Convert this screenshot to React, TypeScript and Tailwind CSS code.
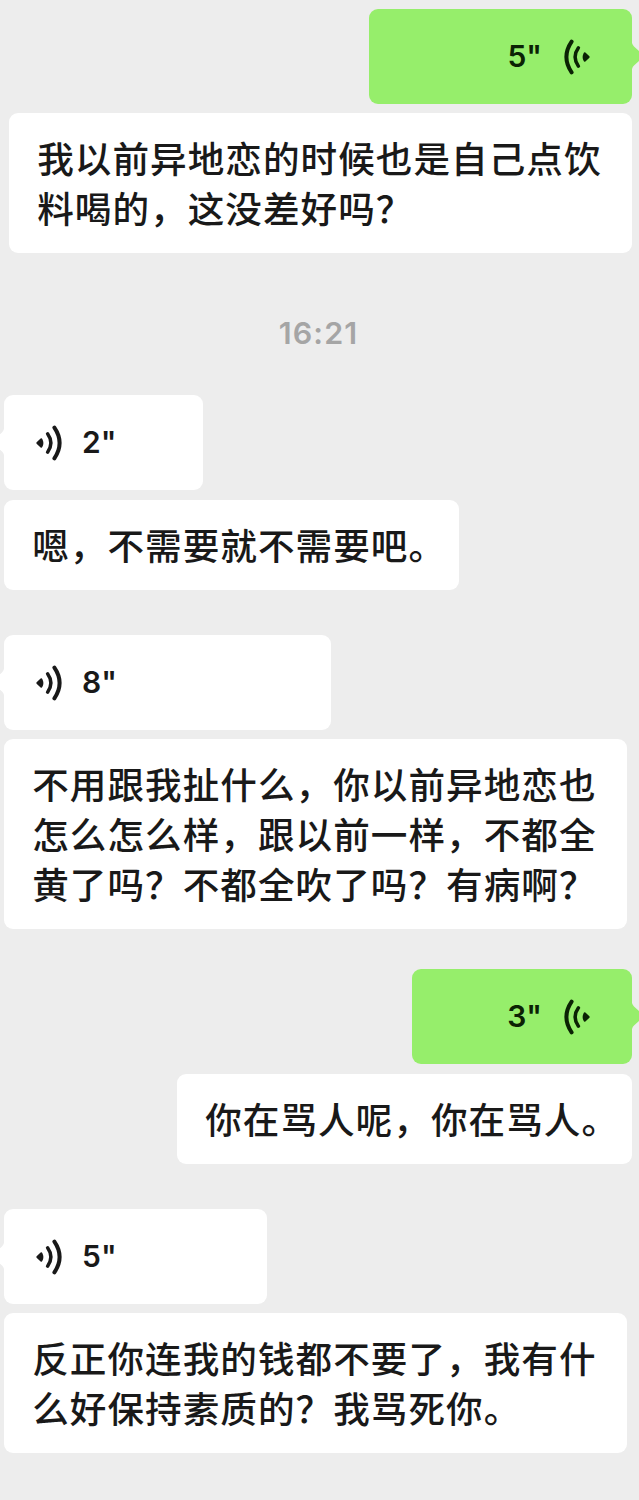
import { clsx } from "clsx";

type Side = "left" | "right";

function SoundIcon({ side }: { side: Side }) {
  return (
    <svg
      viewBox="0 0 26 36"
      className={clsx("h-9 w-[26px] shrink-0", side === "right" && "-scale-x-100")}
      fill="none"
      stroke="currentColor"
      strokeLinecap="round"
    >
      <path
        d="M0.6 17.2 L4.6 13.6 Q5.8 12.9 6.4 14.2 Q8.4 18 6.4 21.8 Q5.8 23.1 4.6 22.4 L0.6 18.8 Q0 18 0.6 17.2 Z"
        fill="currentColor"
        stroke="none"
      />
      <path d="M11.6 8.8 Q18.2 18 11.6 27.2" strokeWidth="3.5" />
      <path d="M18.4 2.7 Q28.8 18 18.4 33.3" strokeWidth="4" />
    </svg>
  );
}

function Voice({ side, seconds, className }: { side: Side; seconds: number; className: string }) {
  const right = side === "right";
  return (
    <div
      className={clsx(
        "relative flex h-[95px] items-center rounded-[9px]",
        right
          ? "mr-[7px] flex-row-reverse self-end bg-[#96ee6b] pr-[42px] text-[#0b2204]"
          : "ml-1 self-start bg-white pl-8 text-[#191919]",
        className,
      )}
    >
      <SoundIcon side={side} />
      <span
        className={clsx(
          "pb-px font-['Inter',sans-serif] text-[30px] leading-none font-semibold",
          right ? "mr-[22px]" : "ml-5",
        )}
      >
        {seconds}&quot;
      </span>
      <svg
        viewBox="0 0 12 30"
        className={clsx("absolute top-8 h-[30px] w-3", right ? "left-full" : "right-full -scale-x-100")}
        fill={right ? "#96ee6b" : "#ffffff"}
      >
        <path d="M0 2 Q0.5 4 2 5.4 L9.5 12.2 Q11.8 15 9.5 17.8 L2 24.6 Q0.5 26 0 28 Z" />
      </svg>
    </div>
  );
}

function Transcript({ side, lines, className }: { side: Side; lines: string[]; className: string }) {
  return (
    <div
      className={clsx(
        "rounded-[9px] bg-white py-5 pl-[28.2px] font-['Noto_Sans_CJK_SC',sans-serif] text-[36.6px] leading-[50px] font-medium tracking-[1.05px] whitespace-nowrap text-[#191919]",
        side === "right" ? "mr-[7px] self-end" : "ml-1 self-start",
        className,
      )}
    >
      {lines.map((line) => (
        <p key={line}>{line}</p>
      ))}
    </div>
  );
}

export default function App() {
  return (
    <main className="flex h-[1500px] w-[639px] flex-col overflow-hidden bg-[#ededed] pt-[9px]">
      <Voice side="right" seconds={5} className="w-[263px]" />
      <Transcript
        side="right"
        className="mt-[9px] w-[623px]"
        lines={["我以前异地恋的时候也是自己点饮", "料喝的，这没差好吗？"]}
      />
      <time className="mt-[62px] h-9 self-center pr-0.5 font-['Inter',sans-serif] text-[30.5px] leading-9 font-semibold tracking-[1.1px] text-[#a5a5a5]">
        16:21
      </time>
      <Voice side="left" seconds={2} className="mt-[44px] w-[199px]" />
      <Transcript side="left" className="mt-[10px] w-[455px]" lines={["嗯，不需要就不需要吧。"]} />
      <Voice side="left" seconds={8} className="mt-[45px] w-[327px]" />
      <Transcript
        side="left"
        className="mt-[9px] w-[623px]"
        lines={[
          "不用跟我扯什么，你以前异地恋也",
          "怎么怎么样，跟以前一样，不都全",
          "黄了吗？不都全吹了吗？有病啊？",
        ]}
      />
      <Voice side="right" seconds={3} className="mt-[40px] w-[220px]" />
      <Transcript side="right" className="mt-[10px] w-[455px]" lines={["你在骂人呢，你在骂人。"]} />
      <Voice side="left" seconds={5} className="mt-[45px] w-[263px]" />
      <Transcript
        side="left"
        className="mt-[9px] w-[623px]"
        lines={["反正你连我的钱都不要了，我有什", "么好保持素质的？我骂死你。"]}
      />
    </main>
  );
}
